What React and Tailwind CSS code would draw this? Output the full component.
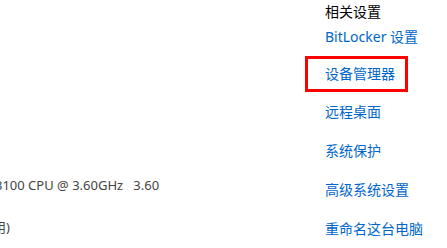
import React from 'react';

const links = ['远程桌面', '系统保护', '高级系统设置', '重命名这台电脑'];

export default function App() {
  return (
    <div
      className="w-[447px] h-[248px] bg-white flex overflow-hidden"
      style={{ fontFamily: '"Noto Sans", "Noto Sans CJK SC", sans-serif' }}
    >
      {/* left: system info, clipped by the window edge */}
      <div className="w-[305px] shrink-0 overflow-hidden text-[13px] text-[#444]">
        <div className="h-[176px]" />
        <div className="h-[20px] flex items-center whitespace-pre ml-[-5px]">
          3100 CPU @ 3.60GHz   3.60
        </div>
        <div className="h-[22px]" />
        <div className="h-[20px] flex items-center whitespace-pre ml-[-7px]">用)</div>
      </div>

      {/* right: related settings */}
      <div className="flex-1 flex flex-col text-[14px]">
        <div className="h-6 flex items-center pl-5 text-black">相关设置</div>
        <div className="h-[30px] flex items-center pl-5 text-[#0066cc]">BitLocker 设置</div>
        <div className="mt-[5px] w-[103px] h-[38px] border-[3px] border-[#ff0000] flex items-center pl-[17px] text-[#0066cc]">
          设备管理器
        </div>
        <div className="flex flex-col">
          {links.map((t) => (
            <div key={t} className="h-[39px] flex items-center pl-5 text-[#0066cc]">
              {t}
            </div>
          ))}
        </div>
      </div>
    </div>
  );
}
